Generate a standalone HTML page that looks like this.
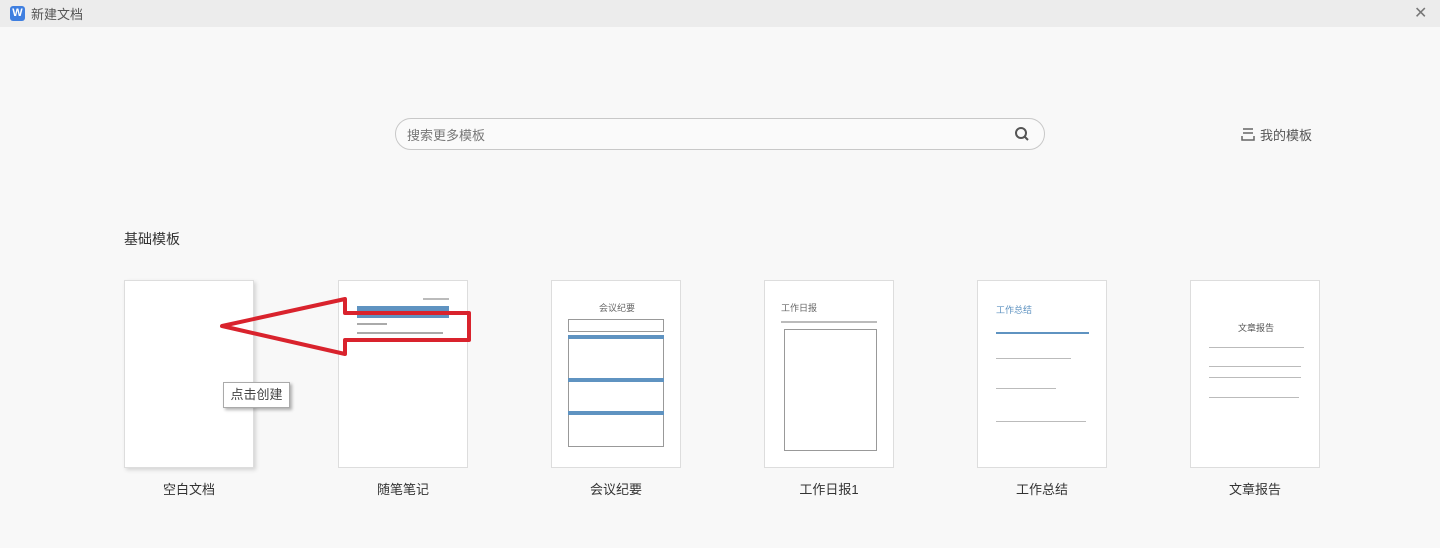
<!DOCTYPE html>
<html><head><meta charset="utf-8"><style>
*{margin:0;padding:0;box-sizing:border-box}
body{width:1440px;height:548px;background:#f8f8f8;font-family:"Liberation Sans","Noto Sans CJK SC",sans-serif;position:relative;overflow:hidden;color:#333}
.top{position:absolute;left:0;top:0;width:1440px;height:27px;background:#ececec}
.abs{position:absolute}
.card{position:absolute;top:280px;width:130px;height:188px;background:#fff;border:1px solid #ddd}
.lbl{position:absolute;top:479px;width:130px;text-align:center;font-size:13px;color:#333}
.l{position:absolute;height:2px;background:#bbb}
.box{position:absolute;border:1px solid #999}
.bar{position:absolute;background:#5f93c1}
</style></head><body>
<div class="top"></div>
<div class="abs" style="left:10px;top:6px;width:15px;height:15px;background:#3f7fe0;border-radius:3px;color:#fff;font-size:11px;font-weight:bold;text-align:center;line-height:15px">W</div>
<div class="abs" style="left:31px;top:4px;font-size:13px;color:#555">新建文档</div>
<div class="abs" style="left:1414px;top:3px;font-size:16px;color:#777">✕</div>

<div class="abs" style="left:395px;top:118px;width:650px;height:32px;border:1px solid #c8c8c8;border-radius:16px;background:#fafafa"></div>
<div class="abs" style="left:407px;top:125px;font-size:13px;color:#777">搜索更多模板</div>
<svg class="abs" style="left:1014px;top:126px" width="16" height="16"><circle cx="7" cy="7" r="5" fill="none" stroke="#555" stroke-width="2"/><line x1="10.5" y1="10.5" x2="14" y2="14" stroke="#555" stroke-width="2"/></svg>
<svg class="abs" style="left:1240px;top:127px" width="16" height="16"><line x1="3" y1="2" x2="13" y2="2" stroke="#666" stroke-width="1.5"/><line x1="3" y1="6" x2="13" y2="6" stroke="#666" stroke-width="1.5"/><path d="M2 9 V13 H14 V9" fill="none" stroke="#666" stroke-width="1.5"/></svg>
<div class="abs" style="left:1260px;top:125px;font-size:13px;color:#555">我的模板</div>

<div class="abs" style="left:124px;top:229px;font-size:14px;color:#333">基础模板</div>

<div class="card" style="left:124px;box-shadow:2px 2px 4px rgba(0,0,0,.15)"></div>
<div class="card" style="left:338px">
  <div class="abs" style="left:84px;top:17px;width:26px;height:2px;background:#bbb"></div>
  <div class="bar" style="left:18px;top:25px;width:92px;height:12px"></div>
  <div class="abs" style="left:18px;top:42px;width:30px;height:2px;background:#aaa"></div>
  <div class="abs" style="left:18px;top:51px;width:86px;height:2px;background:#aaa"></div>
</div>
<div class="card" style="left:551px">
  <div class="abs" style="left:0;top:20px;width:130px;text-align:center;font-size:9px;color:#666">会议纪要</div>
  <div class="box" style="left:16px;top:38px;width:96px;height:13px"></div>
  <div class="box" style="left:16px;top:54px;width:96px;height:112px"></div>
  <div class="bar" style="left:16px;top:54px;width:96px;height:4px"></div>
  <div class="bar" style="left:16px;top:97px;width:96px;height:4px"></div>
  <div class="bar" style="left:16px;top:130px;width:96px;height:4px"></div>
</div>
<div class="card" style="left:764px">
  <div class="abs" style="left:16px;top:20px;font-size:9px;color:#666">工作日报</div>
  <div class="l" style="left:16px;top:40px;width:96px"></div>
  <div class="box" style="left:19px;top:48px;width:93px;height:122px"></div>
</div>
<div class="card" style="left:977px">
  <div class="abs" style="left:18px;top:22px;font-size:9px;color:#5f93c1">工作总结</div>
  <div class="bar" style="left:18px;top:51px;width:93px;height:2px"></div>
  <div class="l" style="left:18px;top:77px;width:75px;height:1px"></div>
  <div class="l" style="left:18px;top:107px;width:60px;height:1px"></div>
  <div class="l" style="left:18px;top:140px;width:90px;height:1px"></div>
</div>
<div class="card" style="left:1190px">
  <div class="abs" style="left:0;top:40px;width:130px;text-align:center;font-size:9px;color:#555">文章报告</div>
  <div class="l" style="left:18px;top:66px;width:95px;height:1px"></div>
  <div class="l" style="left:18px;top:85px;width:92px;height:1px"></div>
  <div class="l" style="left:18px;top:96px;width:92px;height:1px"></div>
  <div class="l" style="left:18px;top:116px;width:90px;height:1px"></div>
</div>

<div class="lbl" style="left:124px">空白文档</div>
<div class="lbl" style="left:338px">随笔笔记</div>
<div class="lbl" style="left:551px">会议纪要</div>
<div class="lbl" style="left:764px">工作日报1</div>
<div class="lbl" style="left:977px">工作总结</div>
<div class="lbl" style="left:1190px">文章报告</div>

<svg class="abs" style="left:0;top:0" width="1440" height="548"><polygon points="222,326 345,299 345,313 469,313 469,340 345,340 345,354" fill="none" stroke="#d9232d" stroke-width="4" stroke-linejoin="round"/></svg>
<div class="abs" style="left:223px;top:382px;width:67px;height:26px;background:#fff;border:1px solid #aaa;box-shadow:2px 2px 3px rgba(0,0,0,.3);font-size:13px;color:#444;text-align:center;line-height:24px">点击创建</div>
</body></html>
